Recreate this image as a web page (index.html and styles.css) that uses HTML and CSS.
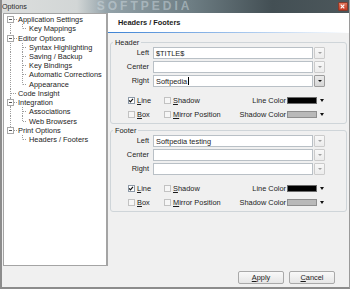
FILE: index.html
```html
<!DOCTYPE html>
<html lang="en">
<head>
    <meta charset="UTF-8">
    <meta name="viewport" content="width=device-width, initial-scale=1.0">
    <title>Options</title>
    <link rel="stylesheet" href="styles.css">
</head>
<body>
    <div class="window">
        <div class="titlebar">
            <span class="title">Options</span>
            <span class="mark">SOFTPEDIA</span>
            <span class="close">
                <svg width="10" height="9" viewBox="0 0 10 9"><path d="M3 2.5 L7 6.5 M7 2.5 L3 6.5" stroke="#fff" stroke-width="1.3"/></svg>
            </span>
        </div>
        <div class="main">
            <div class="tree">
                <div class="row top first"><span class="exp"></span><span class="hl"></span>Application Settings</div>
                <div class="row child end"><span class="hl sub"></span>Key Mappings</div>
                <div class="row top"><span class="exp"></span><span class="hl"></span>Editor Options</div>
                <div class="row child"><span class="hl sub"></span>Syntax Highlighting</div>
                <div class="row child"><span class="hl sub"></span>Saving / Backup</div>
                <div class="row child"><span class="hl sub"></span>Key Bindings</div>
                <div class="row child"><span class="hl sub"></span>Automatic Corrections</div>
                <div class="row child end"><span class="hl sub"></span>Appearance</div>
                <div class="row top"><span class="hl leaf"></span>Code Insight</div>
                <div class="row top"><span class="exp"></span><span class="hl"></span>Integration</div>
                <div class="row child"><span class="hl sub"></span>Associations</div>
                <div class="row child end"><span class="hl sub"></span>Web Browsers</div>
                <div class="row top last"><span class="exp"></span><span class="hl"></span>Print Options</div>
                <div class="row orphan"><span class="hl sub"></span>Headers / Footers</div>
            </div>

            <div class="pane">
                <div class="pane-head">Headers / Footers</div>

                <fieldset class="group">
                    <legend>Header</legend>
                    <div class="field"><label>Left</label><span class="input">$TITLE$</span><span class="drop"></span></div>
                    <div class="field"><label>Center</label><span class="input"></span><span class="drop"></span></div>
                    <div class="field"><label>Right</label><span class="input">Softpedia<i class="caret"></i></span><span class="drop active"></span></div>
                    <div class="opts">
                        <span class="check"><i class="box on"><svg width="7" height="7" viewBox="0 0 7 7"><path d="M1.3 3.4 L2.8 5 L5.8 1.5" stroke="#111" stroke-width="1.4" fill="none"/></svg></i><u>L</u>ine</span>
                        <span class="check"><i class="box"></i><u>S</u>hadow</span>
                        <span class="clabel">Line Color</span>
                        <span class="swatch black"></span>
                        <span class="arrow"></span>
                        <span class="check"><i class="box"></i><u>B</u>ox</span>
                        <span class="check"><i class="box"></i><u>M</u>irror Position</span>
                        <span class="clabel">Shadow Color</span>
                        <span class="swatch grey"></span>
                        <span class="arrow"></span>
                    </div>
                </fieldset>

                <fieldset class="group second">
                    <legend>Footer</legend>
                    <div class="field"><label>Left</label><span class="input">Softpedia testing</span><span class="drop"></span></div>
                    <div class="field"><label>Center</label><span class="input"></span><span class="drop"></span></div>
                    <div class="field"><label>Right</label><span class="input"></span><span class="drop"></span></div>
                    <div class="opts">
                        <span class="check"><i class="box on"><svg width="7" height="7" viewBox="0 0 7 7"><path d="M1.3 3.4 L2.8 5 L5.8 1.5" stroke="#111" stroke-width="1.4" fill="none"/></svg></i><u>L</u>ine</span>
                        <span class="check"><i class="box"></i><u>S</u>hadow</span>
                        <span class="clabel">Line Color</span>
                        <span class="swatch black"></span>
                        <span class="arrow"></span>
                        <span class="check"><i class="box"></i><u>B</u>ox</span>
                        <span class="check"><i class="box"></i><u>M</u>irror Position</span>
                        <span class="clabel">Shadow Color</span>
                        <span class="swatch grey"></span>
                        <span class="arrow"></span>
                    </div>
                </fieldset>

                <div class="buttons">
                    <button><u>A</u>pply</button>
                    <button><u>C</u>ancel</button>
                </div>
            </div>
        </div>
    </div>
</body>
</html>
```

FILE: styles.css
```css
@charset "UTF-8";

* {
    margin: 0;
    padding: 0;
    box-sizing: border-box;
}

:root {
    --dot-v: repeating-linear-gradient(to bottom, #9c9c9c 0 1px, transparent 1px 2px);
    --dot-h: repeating-linear-gradient(to right, #9c9c9c 0 1px, transparent 1px 2px);
}

html {
    font-family: "Liberation Sans", Arial, sans-serif;
    font-size: 7.4px;
    color: #1c1c1c;
}

body {
    width: 350px;
    height: 289px;
    overflow: hidden;
    background-color: #f0f0f0;
}

.window {
    width: 350px;
    height: 289px;
    border-left: 2px solid #8c8c8c;
    border-right: 1px solid #9a9a9a;
    border-bottom: 2px solid #8c8c8c;
    background-color: #f0f0f0;
    display: flex;
    flex-direction: column;
}

/* title bar */
.titlebar {
    height: 13px;
    display: flex;
    align-items: center;
    overflow: hidden;
    background: linear-gradient(to right, #dcdedd 0, #d2d6d6 75px, #93a2a9 105px, #6d7d83 190px, #434f54 270px, #4c575b 100%);
}
.title {
    line-height: 13px;
    color: #2a2a2a;
    font-size: 7.2px;
}
.mark {
    margin-left: 70px;
    font-size: 12px;
    font-weight: bold;
    letter-spacing: 3px;
    line-height: 13px;
    color: rgba(214, 224, 230, 0.45);
}
.close {
    margin-left: auto;
    margin-right: 1px;
    width: 10px;
    height: 9px;
    display: flex;
    background: linear-gradient(#e0765c, #c3381f);
    border: 1px solid #8a3a2a;
    border-radius: 1px;
}
.close svg {margin: -1px 0 0 -1px;}

.main {
    flex: 1;
    display: flex;
}

/* tree */
.tree {
    width: 105px;
    height: 253px;
    margin-left: 1px;
    padding-top: 1px;
    background-color: #fff;
    border: 1px solid #a4a4a4;
    border-right-width: 2px;
}
.row {
    height: 9.23px;
    display: flex;
    align-items: center;
    white-space: nowrap;
    background-repeat: no-repeat;
}
.top {
    background-image: var(--dot-v);
    background-position: 6px 0;
    background-size: 1px 100%;
}
.top.first {background-position: 6px 100%; background-size: 1px 50%;}
.top.last {background-size: 1px 50%;}
.child {
    background-image: var(--dot-v), var(--dot-v);
    background-position: 6px 0, 18px 0;
    background-size: 1px 100%, 1px 100%;
}
.child.end {background-size: 1px 100%, 1px 50%;}
.orphan {
    background-image: var(--dot-v);
    background-position: 18px 0;
    background-size: 1px 50%;
}

.exp {
    width: 7px;
    height: 7px;
    margin-left: 3px;
    border: 1px solid #a8a8a8;
    background: linear-gradient(#555, #555) center / 3px 1px no-repeat, #fff;
}
.hl {
    height: 1px;
    width: 4px;
    background-image: var(--dot-h);
}
.hl.leaf {margin-left: 7px; width: 6px; margin-right: 1px;}
.hl.sub {margin-left: 19px; width: 4px; margin-right: 2px;}

/* right pane */
.pane {
    flex: 1;
    display: flex;
    flex-direction: column;
}
.pane-head {
    height: 20px;
    padding-left: 10px;
    line-height: 19px;
    font-weight: bold;
    background: linear-gradient(to right, #3c82d4, #b6d1f1 65%, #fff) bottom / 100% 1px no-repeat, #fff;
}

.group {
    margin: 4.5px 2px 0 2px;
    padding: 0 0 2px 0;
    min-width: 0;
    border: 1px solid #cfd5d9;
    border-radius: 3px;
}
.group.second {margin-top: 1.5px;}
.group legend {
    margin-left: 2px;
    padding: 0 2px;
    line-height: 9px;
}

.field {
    height: 12px;
    margin-top: 2px;
    display: flex;
    padding-right: 21px;
}
.group legend + .field {margin-top: 0.5px;}
.field label {
    width: 38px;
    margin-right: 4px;
    text-align: right;
    line-height: 12px;
}
.input {
    flex: 1;
    display: flex;
    align-items: center;
    padding-left: 2px;
    background-color: #fff;
    border: 1px solid #b9c0c6;
    white-space: nowrap;
}
.caret {
    width: 1px;
    height: 8px;
    margin-left: 0.5px;
    background-color: #000;
}
.drop {
    width: 11px;
    margin-left: 1px;
    border: 1px solid #cbcbcb;
    border-radius: 1px;
    background: linear-gradient(#f8f8f8, #ececec);
    display: flex;
    align-items: center;
    justify-content: center;
}
.drop::after {
    content: "";
    border-left: 2px solid transparent;
    border-right: 2px solid transparent;
    border-top: 2px solid #a0a0a0;
}
.drop.active {
    border-color: #9c9c9c;
    background: linear-gradient(#eaeaea, #d6d6d6);
}
.drop.active::after {border-top-color: #111;}

.opts {
    margin-top: 7px;
    display: grid;
    grid-template-columns: 36px 1fr auto 30px 9px;
    grid-template-rows: 13.5px 13.5px;
    align-items: center;
    padding-left: 17px;
    padding-right: 20px;
}
.check {
    display: flex;
    align-items: center;
    white-space: nowrap;
}
.box {
    width: 7px;
    height: 7px;
    margin-right: 2px;
    display: flex;
    border: 1px solid #c2c2c2;
    background-color: #f6f6f6;
}
.box.on {border-color: #8d9aa8; background-color: #fff;}
.box svg {margin: -1px 0 0 -1px;}
.clabel {
    padding-right: 1px;
    text-align: right;
}
.swatch {
    height: 7px;
    border: 1px solid #6c6c6c;
}
.swatch.black {background-color: #000;}
.swatch.grey {background-color: #b9b9b9; border-color: #8e8e8e;}
.arrow {
    justify-self: center;
    border-left: 2.5px solid transparent;
    border-right: 2.5px solid transparent;
    border-top: 3px solid #111;
}

.buttons {
    margin-top: auto;
    margin-bottom: 3px;
    margin-right: 14px;
    display: flex;
    justify-content: flex-end;
    gap: 5px;
}
.buttons button {
    width: 46px;
    height: 13px;
    font: inherit;
    color: #1c1c1c;
    border: 1px solid #a9a9a9;
    border-radius: 2px;
    background: linear-gradient(#f9f9f9, #e6e6e6);
}
```
